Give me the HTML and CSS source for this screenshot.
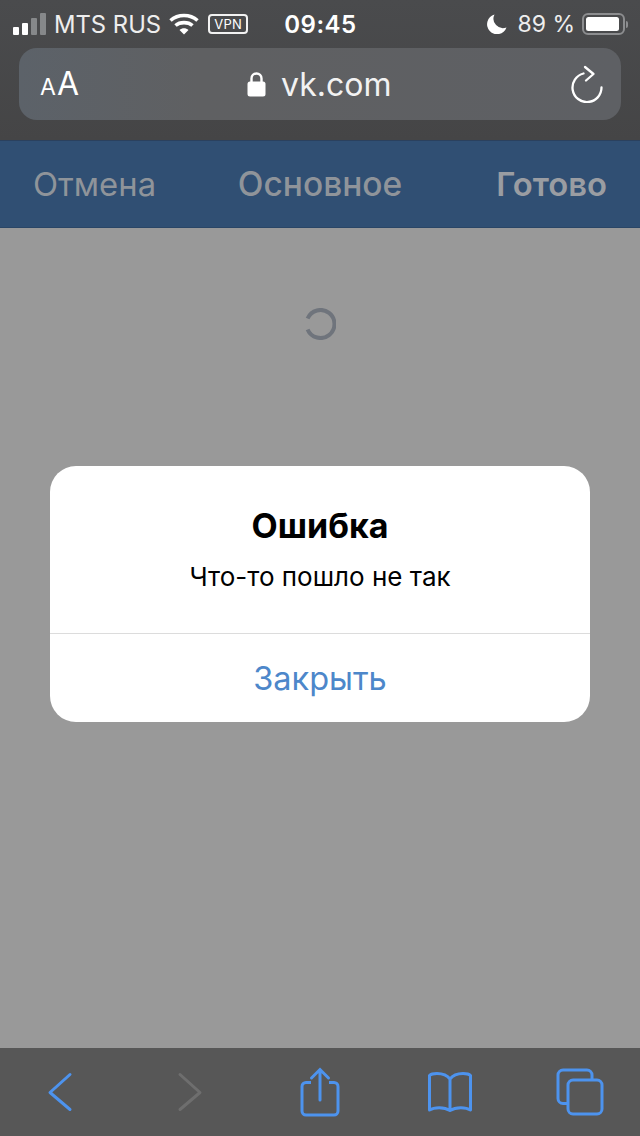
FILE: index.html
```html
<!DOCTYPE html>
<html lang="en">
<head>
  <meta charset="UTF-8">
  <title>vk.com</title>
  <link rel="stylesheet" href="styles.css">
</head>
<body>
  <div class="browser-top">
    <div class="status-bar">
      <div class="status-left">
        <div class="signal">
          <span class="bar bar-1"></span>
          <span class="bar bar-2"></span>
          <span class="bar bar-3 dim"></span>
          <span class="bar bar-4 dim"></span>
        </div>
        <span class="carrier">MTS RUS</span>
        <svg class="wifi" viewBox="0 0 30 22" width="30" height="22">
          <path d="M1.5 7.5C9 .8 21 .8 28.5 7.5" fill="none" stroke="#fff" stroke-width="3.6"/>
          <path d="M6.5 12.5C11 8.6 19 8.6 23.5 12.5" fill="none" stroke="#fff" stroke-width="3.6"/>
          <path d="M10.5 17L15 21.5L19.5 17C17 14.6 13 14.6 10.5 17Z" fill="#fff"/>
        </svg>
        <span class="vpn">VPN</span>
      </div>
      <span class="clock">09:45</span>
      <div class="status-right">
        <svg class="moon" viewBox="0 0 20 20" width="20" height="20">
          <path d="M7.5 0.5A10 10 0 1 0 19.5 13.5A9.5 9.5 0 0 1 7.5 0.5Z" fill="#fff"/>
        </svg>
        <span class="percent">89 %</span>
        <div class="battery"><span class="battery-level"></span></div>
        <span class="battery-tip"></span>
      </div>
    </div>
    <div class="url-bar">
      <span class="text-size"><small>A</small>A</span>
      <div class="address">
        <svg class="lock" viewBox="0 0 19 26" width="19" height="26">
          <path d="M4.500 12V7.500a5 5 0 0 1 10 0V12" fill="none" stroke="#fff" stroke-width="2.4"/>
          <rect x="0.500" y="10.500" width="18" height="15" rx="2.500" fill="#fff"/>
        </svg>
        <span>vk.com</span>
      </div>
      <svg class="reload" viewBox="0 0 32 38" width="32" height="38">
        <path d="M12.500 8.500A14.500 14.500 0 1 0 30.500 22.500" fill="none" stroke="#fff" stroke-width="2.3" stroke-linecap="round"/>
        <path d="M14 2L22.500 9L15 15.500" fill="none" stroke="#fff" stroke-width="2.3" stroke-linecap="round" stroke-linejoin="round"/>
      </svg>
    </div>
  </div>

  <div class="page">
    <div class="app-header">
      <span class="header-cancel">Отмена</span>
      <span class="header-title">Основное</span>
      <span class="header-done">Готово</span>
    </div>
    <div class="content">
      <svg class="spinner" viewBox="0 0 32 32" width="32" height="32">
        <path d="M3.600 10.500A14 14 0 1 1 3.600 21.500" fill="none" stroke="#6f747c" stroke-width="4"/>
      </svg>
      <div class="alert">
        <div class="alert-body">
          <div class="alert-title">Ошибка</div>
          <div class="alert-text">Что-то пошло не так</div>
        </div>
        <div class="alert-button">Закрыть</div>
      </div>
    </div>
  </div>

  <div class="toolbar">
    <svg viewBox="0 0 26 40" width="26" height="40">
      <path d="M23 2.500L3 20.500L23 37.500" fill="none" stroke="#4d93ee" stroke-width="3" stroke-linecap="round" stroke-linejoin="round"/>
    </svg>
    <svg viewBox="0 0 26 40" width="26" height="40">
      <path d="M3 2.500L23 20.500L3 37.500" fill="none" stroke="#6e6e6e" stroke-width="3" stroke-linecap="round" stroke-linejoin="round"/>
    </svg>
    <svg viewBox="0 0 40 50" width="40" height="50">
      <path d="M11 15.500H6a4 4 0 0 0-4 4V44a4 4 0 0 0 4 4h28a4 4 0 0 0 4-4V19.500a4 4 0 0 0-4-4h-5" fill="none" stroke="#4d93ee" stroke-width="3"/>
      <path d="M20 33V3M11.500 11L20 2.500L28.500 11" fill="none" stroke="#4d93ee" stroke-width="3" stroke-linecap="round"/>
    </svg>
    <svg viewBox="0 0 46 40" width="46" height="40">
      <path d="M23 7C20 3 15 1.500 10 1.500C7 1.500 4 2 2.500 3.500V38C7 35 17 34.500 23 38.500C29 34.500 39 35 43.500 38V3.500C42 2 39 1.500 36 1.500C31 1.500 26 3 23 7ZM23 7V38.500" fill="none" stroke="#4d93ee" stroke-width="3" stroke-linejoin="round"/>
    </svg>
    <svg viewBox="0 0 48 48" width="48" height="48">
      <path d="M12 35.500H7a5 5 0 0 1-5-5V7a5 5 0 0 1 5-5h24a5 5 0 0 1 5 5v4" fill="none" stroke="#4d93ee" stroke-width="3"/>
      <rect x="12" y="12" width="34" height="34" rx="5" fill="none" stroke="#4d93ee" stroke-width="3"/>
    </svg>
  </div>
</body>
</html>
```

FILE: styles.css
```css
html, body {
  margin: 0;
  padding: 0;
}

body {
  width: 640px;
  height: 1136px;
  display: flex;
  flex-direction: column;
  overflow: hidden;
  font-family: "Inter", "Liberation Sans", sans-serif;
  background: #999;
}

.browser-top {
  height: 140px;
  box-sizing: border-box;
  background: linear-gradient(180deg, #4a4b4d 0%, #454546 100%);
  color: #fff;
}

.status-bar {
  height: 48px;
  box-sizing: border-box;
  padding: 0 12px 0 13px;
  display: flex;
  align-items: center;
  justify-content: space-between;
  font-size: 24px;
}

.status-left,
.status-right {
  display: flex;
  align-items: center;
}

.status-left {
  width: 272px;
}

.status-right {
  width: 272px;
  justify-content: flex-end;
}

.signal {
  display: flex;
  align-items: flex-end;
  gap: 3px;
  height: 22px;
  margin-right: 8px;
}

.bar {
  width: 6px;
  background: #fff;
  border-radius: 1px;
}

.bar-1 { height: 8px; }
.bar-2 { height: 12px; }
.bar-3 { height: 17px; }
.bar-4 { height: 22px; }

.dim {
  background: #86888a;
}

.carrier {
  color: #eee;
  font-size: 23.8px;
}

.wifi {
  margin-left: 8px;
}

.vpn {
  margin-left: 9px;
  box-sizing: border-box;
  width: 40px;
  height: 20px;
  border: 2px solid #f2f2f2;
  border-radius: 4px;
  font-size: 13px;
  line-height: 16px;
  text-align: center;
  letter-spacing: 0.3px;
}

.clock {
  font-size: 24px;
  font-weight: 600;
  letter-spacing: 0.5px;
}

.percent {
  margin: 0 7px 0 10px;
  color: #eee;
  font-size: 23px;
}

.battery {
  box-sizing: border-box;
  width: 43px;
  height: 22px;
  border: 2px solid #8c8d8f;
  border-radius: 6px;
  padding: 2px;
}

.battery-level {
  display: block;
  width: 33px;
  height: 14px;
  background: #fff;
  border-radius: 2.5px;
}

.battery-tip {
  width: 2px;
  height: 7px;
  margin-left: 1px;
  background: #8c8d8f;
  border-radius: 0 2px 2px 0;
}

.url-bar {
  position: relative;
  width: 602px;
  height: 72px;
  margin-left: 19px;
  box-sizing: border-box;
  padding: 0 18px 0 21px;
  display: flex;
  align-items: center;
  justify-content: space-between;
  border-radius: 18px;
  background: linear-gradient(90deg, #5c6269 0%, #5f6062 30%, #5e6064 100%);
}

.text-size {
  font-size: 32px;
  line-height: 1;
}

.text-size small {
  font-size: 23px;
  margin-right: 1px;
}

.address {
  position: absolute;
  left: 228px;
  display: flex;
  align-items: center;
  gap: 15px;
  font-size: 32px;
  color: #f2f2f2;
}

.page {
  flex: 1;
  display: flex;
  flex-direction: column;
}

.app-header {
  height: 88px;
  box-sizing: border-box;
  padding: 0 33px;
  display: grid;
  grid-template-columns: 1fr auto 1fr;
  align-items: center;
  background: #304f73;
  border-top: 1px solid #2b415e;
  border-bottom: 1px solid #2a4666;
  font-size: 32.8px;
  color: #8f949a;
}

.header-title {
  font-size: 33.5px;
  font-weight: 500;
}

.header-done {
  justify-self: end;
  color: #9a9da2;
  font-weight: 600;
}

.content {
  position: relative;
  flex: 1;
  display: flex;
  flex-direction: column;
  align-items: center;
}

.spinner {
  margin-top: 80px;
}

.alert {
  width: 540px;
  margin-top: 126px;
  background: #fff;
  border-radius: 26px;
  overflow: hidden;
  text-align: center;
}

.alert-body {
  height: 168px;
  box-sizing: border-box;
  padding-top: 40px;
  border-bottom: 1px solid #dcdcdc;
}

.alert-title {
  font-size: 34px;
  font-weight: 700;
  line-height: 40px;
  color: #000;
}

.alert-text {
  margin-top: 15px;
  font-size: 26px;
  line-height: 32px;
  color: #000;
}

.alert-button {
  height: 88px;
  font-size: 32.5px;
  line-height: 90px;
  color: #4d87ca;
}

.toolbar {
  height: 88px;
  display: grid;
  grid-template-columns: repeat(5, 60px);
  gap: 70px;
  justify-content: center;
  justify-items: center;
  align-items: center;
  background: #575757;
}
```
